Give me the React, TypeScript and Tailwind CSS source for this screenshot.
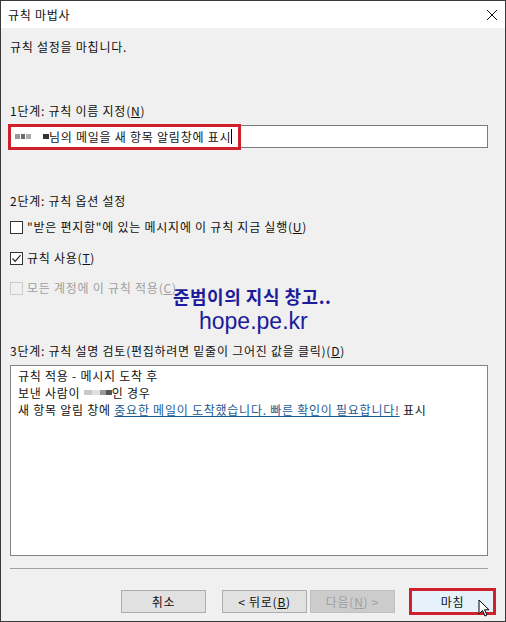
import React from "react";

const font = { fontFamily: '"Noto Sans CJK KR", "Noto Sans", sans-serif' };

function Blur({ w = 6, shade = "bg-[#8a8a8a]" }: { w?: number; shade?: string }) {
  return <span className={`inline-block h-[5px] align-middle ${shade}`} style={{ width: w }} />;
}

function Check({ checked, disabled }: { checked?: boolean; disabled?: boolean }) {
  return (
    <span
      className={`w-[13px] h-[13px] border flex items-center justify-center ${
        disabled ? "border-[#cccccc] bg-[#f0f0f0]" : "border-[#333333] bg-white"
      }`}
    >
      {checked && (
        <svg width="11" height="11" viewBox="0 0 11 11">
          <path d="M1.5 5.5 L4.2 8.3 L9.5 2.2" fill="none" stroke="#222" strokeWidth="1.2" />
        </svg>
      )}
    </span>
  );
}

function Btn({ children, disabled, primary }: { children: React.ReactNode; disabled?: boolean; primary?: boolean }) {
  return (
    <div
      className={`w-[85px] h-[23px] flex items-center justify-center text-[12px] border ${
        primary
          ? "bg-[#e5f1fb] border-[#d0202c] border-[3px] w-[87px] h-[27px]"
          : disabled
          ? "bg-[#cccccc] border-[#bfbfbf] text-[#a0a0a0]"
          : "bg-[#e1e1e1] border-[#adadad] text-[#111]"
      }`}
    >
      {children}
    </div>
  );
}

export default function App() {
  return (
    <div className="w-[506px] h-[622px] bg-[#f0f0f0] border border-[#3a3a3a] flex flex-col relative overflow-hidden text-[#111] tracking-[0.75px]" style={font}>
      {/* title bar */}
      <div className="h-[27px] bg-white flex items-center justify-between pl-[7px] pr-[7px] shrink-0">
        <span className="text-[12px]">규칙 마법사</span>
        <svg width="12" height="12" viewBox="0 0 12 12">
          <path d="M1 1 L11 11 M11 1 L1 11" stroke="#111" strokeWidth="1" />
        </svg>
      </div>

      <div className="flex flex-col px-[9px] text-[12px]">
        <div className="mt-[10px] leading-[18px]">규칙 설정을 마칩니다.</div>

        <div className="mt-[46px] leading-[18px]">
          1단계: 규칙 이름 지정(<span className="underline">N</span>)
        </div>
        <div className="mt-[5px] relative h-[23px] w-[478px] bg-white border border-[#7a7a7a] flex items-center pl-[4px]">
          <span className="flex items-center gap-[1px]">
            <Blur w={5} shade="bg-[#9a9a9a]" />
            <Blur w={4} shade="bg-[#6a6a6a]" />
            <Blur w={5} shade="bg-[#aaaaaa]" />
            <span className="w-[10px]" />
            <Blur w={6} shade="bg-[#333]" />
          </span>
          <span className="leading-[18px]">님의 메일을 새 항목 알림창에 표시</span>
          <span className="w-px h-[15px] bg-black" />
          <div className="absolute left-[-3px] top-[-2px] w-[233px] h-[26px] border-[3px] border-[#d0202c]" />
        </div>

        <div className="mt-[44px] leading-[18px]">2단계: 규칙 옵션 설정</div>
        <div className="mt-[8px] flex items-center gap-[4px] leading-[18px]">
          <Check />
          <span>"받은 편지함"에 있는 메시지에 이 규칙 지금 실행(<span className="underline">U</span>)</span>
        </div>
        <div className="mt-[13px] flex items-center gap-[4px] leading-[18px]">
          <Check checked />
          <span>규칙 사용(<span className="underline">T</span>)</span>
        </div>
        <div className="mt-[12px] flex items-center gap-[4px] leading-[18px] text-[#a0a0a0]">
          <Check disabled />
          <span>모든 계정에 이 규칙 적용(<span className="underline">C</span>)</span>
        </div>

        <div className="mt-[45px] leading-[18px]">
          3단계: 규칙 설명 검토(편집하려면 밑줄이 그어진 값을 클릭)(<span className="underline">D</span>)
        </div>
        <div className="mt-[5px] h-[191px] w-[478px] bg-white border border-[#828282] px-[7px] pt-[1px] flex flex-col leading-[17px]">
          <span>규칙 적용 - 메시지 도착 후</span>
          <span className="flex items-center">
            보낸 사람이&nbsp;
            <Blur w={8} shade="bg-[#c8c8c8]" />
            <Blur w={8} shade="bg-[#e0e0e0]" />
            <Blur w={6} shade="bg-[#999]" />
            <Blur w={6} shade="bg-[#555]" />
            인 경우
          </span>
          <span>
            새 항목 알림 창에{" "}
            <span className="underline text-[#1a5b95]">중요한 메일이 도착했습니다. 빠른 확인이 필요합니다!</span> 표시
          </span>
        </div>

        <div className="mt-[12px] h-px w-[478px] bg-[#a0a0a0]" />

        <div className="mt-[19px] flex items-center">
          <div className="ml-[111px]"><Btn>취소</Btn></div>
          <div className="ml-[16px]"><Btn>&lt; 뒤로(<span className="underline">B</span>)</Btn></div>
          <div className="ml-[3px]"><Btn disabled>다음(<span className="underline">N</span>) &gt;</Btn></div>
          <div className="ml-[14px]"><Btn primary>마침</Btn></div>
        </div>
      </div>

      {/* watermark */}
      <div className="absolute left-[172px] top-[283px] flex flex-col text-[#1c1c9c] pointer-events-none tracking-normal">
        <span className="text-[18px] font-bold leading-[24px] tracking-[0.5px]">준범이의 지식 창고..</span>
        <span className="ml-[26px] text-[23px] leading-[26px] font-['Liberation_Sans',sans-serif]">hope.pe.kr</span>
      </div>

      {/* cursor */}
      <svg className="absolute left-[477px] top-[598px]" width="14" height="20" viewBox="0 0 14 20">
        <path d="M1 1 L1 15 L4.5 11.5 L7 17 L9 16 L6.5 10.8 L11 10.8 Z" fill="white" stroke="black" strokeWidth="1" />
      </svg>
    </div>
  );
}
